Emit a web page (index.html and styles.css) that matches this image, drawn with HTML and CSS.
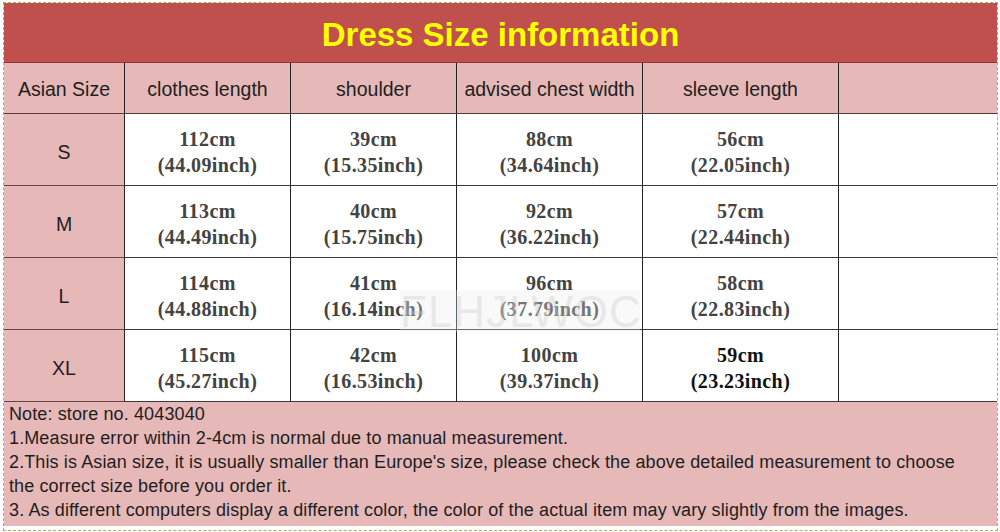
FILE: index.html
```html
<!DOCTYPE html>
<html>
<head>
<meta charset="utf-8">
<link rel="stylesheet" href="styles.css">
</head>
<body>
<div class="sheet">
  <div class="title">Dress Size information</div>
  <div class="grid">
    <div class="cell head">Asian Size</div>
    <div class="cell head">clothes length</div>
    <div class="cell head">shoulder</div>
    <div class="cell head">advised chest width</div>
    <div class="cell head">sleeve length</div>
    <div class="cell head last"></div>

    <div class="cell size">S</div>
    <div class="cell val">112cm<br>(44.09inch)</div>
    <div class="cell val">39cm<br>(15.35inch)</div>
    <div class="cell val">88cm<br>(34.64inch)</div>
    <div class="cell val">56cm<br>(22.05inch)</div>
    <div class="cell val last"></div>

    <div class="cell size">M</div>
    <div class="cell val">113cm<br>(44.49inch)</div>
    <div class="cell val">40cm<br>(15.75inch)</div>
    <div class="cell val">92cm<br>(36.22inch)</div>
    <div class="cell val">57cm<br>(22.44inch)</div>
    <div class="cell val last"></div>

    <div class="cell size">L</div>
    <div class="cell val">114cm<br>(44.88inch)</div>
    <div class="cell val">41cm<br>(16.14inch)</div>
    <div class="cell val">96cm<br>(37.79inch)</div>
    <div class="cell val">58cm<br>(22.83inch)</div>
    <div class="cell val last"></div>

    <div class="cell size">XL</div>
    <div class="cell val">115cm<br>(45.27inch)</div>
    <div class="cell val">42cm<br>(16.53inch)</div>
    <div class="cell val">100cm<br>(39.37inch)</div>
    <div class="cell val dark">59cm<br>(23.23inch)</div>
    <div class="cell val last"></div>
  </div>
  <div class="notes">
    <p>Note: store no. 4043040</p>
    <p>1.Measure error within 2-4cm is normal due to manual measurement.</p>
    <p>2.This is Asian size, it is usually smaller than Europe's size, please check the above detailed measurement to choose the correct size before you order it.</p>
    <p>3. As different computers display a different color, the color of the actual item may vary slightly from the images.</p>
  </div>
  <div class="watermark">FLHJLWOC</div>
</div>
</body>
</html>
```

FILE: styles.css
```css
html, body {
  margin: 0;
  padding: 0;
  background: #ffffff;
}
body {
  width: 1000px;
  height: 532px;
  overflow: hidden;
}
.sheet {
  position: relative;
  margin: 2px 0 0 3px;
  width: 993px;
  height: 527px;
  border: 1px dashed #9bb764;
  box-sizing: content-box;
}
.title {
  height: 59px;
  background: #c0504d;
  border-bottom: 1px solid #8f3533;
  color: #ffff00;
  font-family: "Liberation Sans", Arial, sans-serif;
  font-weight: bold;
  font-size: 33px;
  line-height: 64px;
  text-align: center;
}
.grid {
  display: grid;
  grid-template-columns: 121px 166px 166px 186px 196px 158px;
  grid-template-rows: 51px 72px 72px 72px 72px;
}
.cell {
  border-right: 1px solid #222;
  border-bottom: 1px solid #3a3a3a;
  display: flex;
  align-items: center;
  justify-content: center;
  text-align: center;
  box-sizing: border-box;
}
.cell.last {
  border-right: none;
}
.head {
  background: #e6b8b7;
  border-bottom-color: #5a3a3a;
  font-family: "Liberation Sans", Arial, sans-serif;
  font-size: 19.5px;
  color: #1e1e1e;
  padding-top: 3px;
}
.size {
  background: #e6b8b7;
  border-bottom-color: #6a4444;
  font-family: "Liberation Sans", Arial, sans-serif;
  font-size: 19.5px;
  color: #1e1e1e;
  padding-top: 5px;
}
.val {
  background: #ffffff;
  font-family: "Liberation Serif", "Times New Roman", serif;
  font-weight: bold;
  font-size: 20px;
  letter-spacing: 0.4px;
  line-height: 26px;
  color: #434343;
  padding-top: 4px;
}
.val.dark {
  color: #111;
}
.notes {
  background: #e6b8b7;
  height: 124px;
  padding: 0 30px 0 5px;
  box-sizing: border-box;
  font-family: "Liberation Sans", Arial, sans-serif;
  font-size: 18px;
  letter-spacing: 0.12px;
  line-height: 24px;
  color: #1e1e1e;
}
.notes p {
  margin: 0;
}
.watermark {
  position: absolute;
  left: 396px;
  top: 287px;
  width: 240px;
  height: 42px;
  background: rgba(235, 235, 235, 0.3);
  font-family: "Liberation Sans", Arial, sans-serif;
  font-size: 44px;
  line-height: 44px;
  color: rgba(200, 200, 200, 0.35);
  text-align: center;
  letter-spacing: 1px;
  pointer-events: none;
}
```
